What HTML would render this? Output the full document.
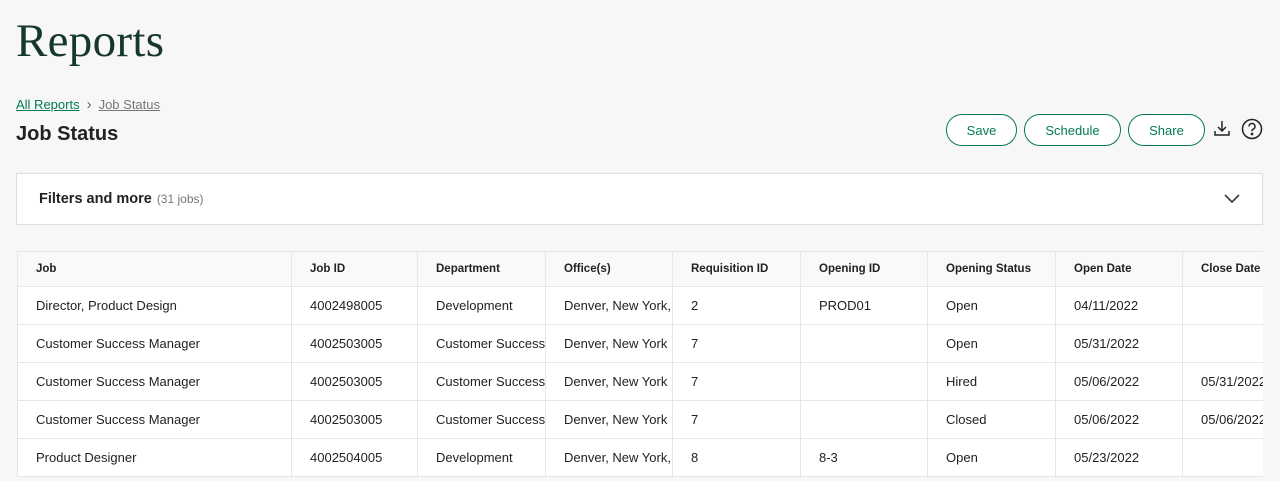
<!DOCTYPE html>
<html><head><style>
body{margin:0;background:#f7f7f7;font-family:"Liberation Sans",sans-serif;width:1280px;height:475px;overflow:hidden;position:relative;color:#222}
h1{position:absolute;left:16px;top:14px;margin:0;font-family:"Liberation Serif",serif;font-weight:normal;font-size:47px;color:#15372c;letter-spacing:0.3px}
.bc{position:absolute;left:16px;top:96px;font-size:13px}
.bc a{color:#047b55;text-decoration:underline}
.bc span.s{color:#666;margin:0 7px;font-size:15px}
.bc span.c{color:#777;text-decoration:underline}
h2{position:absolute;left:16px;top:123px;margin:0;font-size:20px;font-weight:bold;color:#222}
.btn{position:absolute;top:114px;height:32px;border:1px solid #047b55;border-radius:16px;color:#047b55;font-size:13px;display:flex;align-items:center;justify-content:center;box-sizing:border-box;background:#fff}
.filt{position:absolute;left:16px;top:173px;width:1247px;height:52px;background:#fff;border:1px solid #ddd;box-sizing:border-box}
.filt b{position:absolute;left:22px;top:17px;font-size:14.5px}
.filt i{font-style:normal;font-weight:normal;color:#777;font-size:12px;margin-left:5px}
table{border-collapse:collapse;background:#fff;table-layout:fixed;font-size:13px;width:1266px}
td,th{border:1px solid #e6e6e6;padding:0 0 0 18px;height:37px;text-align:left;white-space:nowrap;overflow:hidden}
th{background:#f9f9f9;font-size:11.5px;font-weight:bold;height:34px}
.tw{position:absolute;left:17px;top:251px;width:1246px;height:230px;overflow:hidden}
</style></head><body>
<h1>Reports</h1>
<div class="bc"><a>All Reports</a><span class="s">›</span><span class="c">Job Status</span></div>
<h2>Job Status</h2>
<div class="btn" style="left:946px;width:71px">Save</div>
<div class="btn" style="left:1024px;width:97px">Schedule</div>
<div class="btn" style="left:1128px;width:77px">Share</div>
<svg style="position:absolute;left:1213px;top:119px" width="18" height="18" viewBox="0 0 18 18" fill="none" stroke="#222" stroke-width="1.5"><path d="M9 2v10M5 8l4 4 4-4M2 12v4h14v-4"/></svg>
<svg style="position:absolute;left:1241px;top:118px" width="22" height="22" viewBox="0 0 22 22" fill="none" stroke="#222" stroke-width="1.5"><circle cx="11" cy="11" r="9.5"/><path d="M8 8.5a3 3 0 1 1 4 2.8c-.8.4-1 1-1 1.9"/><circle cx="11" cy="16" r=".6" fill="#222"/></svg>
<div class="filt"><b>Filters and more<i>(31 jobs)</i></b>
<svg style="position:absolute;left:1206px;top:19px" width="18" height="12" viewBox="0 0 18 12" fill="none" stroke="#444" stroke-width="1.8"><path d="M2 2l7 7 7-7"/></svg></div>
<div class="tw"><table>
<colgroup><col style="width:274px"><col style="width:126px"><col style="width:128px"><col style="width:127px"><col style="width:128px"><col style="width:127px"><col style="width:128px"><col style="width:127px"><col style="width:101px"></colgroup>
<tr><th>Job</th><th>Job ID</th><th>Department</th><th>Office(s)</th><th>Requisition ID</th><th>Opening ID</th><th>Opening Status</th><th>Open Date</th><th>Close Date</th></tr>
<tr><td>Director, Product Design</td><td>4002498005</td><td>Development</td><td>Denver, New York, </td><td>2</td><td>PROD01</td><td>Open</td><td>04/11/2022</td><td></td></tr>
<tr><td>Customer Success Manager</td><td>4002503005</td><td>Customer Success</td><td>Denver, New York</td><td>7</td><td></td><td>Open</td><td>05/31/2022</td><td></td></tr>
<tr><td>Customer Success Manager</td><td>4002503005</td><td>Customer Success</td><td>Denver, New York</td><td>7</td><td></td><td>Hired</td><td>05/06/2022</td><td>05/31/2022</td></tr>
<tr><td>Customer Success Manager</td><td>4002503005</td><td>Customer Success</td><td>Denver, New York</td><td>7</td><td></td><td>Closed</td><td>05/06/2022</td><td>05/06/2022</td></tr>
<tr><td>Product Designer</td><td>4002504005</td><td>Development</td><td>Denver, New York, </td><td>8</td><td>8-3</td><td>Open</td><td>05/23/2022</td><td></td></tr>
</table></div>
</body></html>
